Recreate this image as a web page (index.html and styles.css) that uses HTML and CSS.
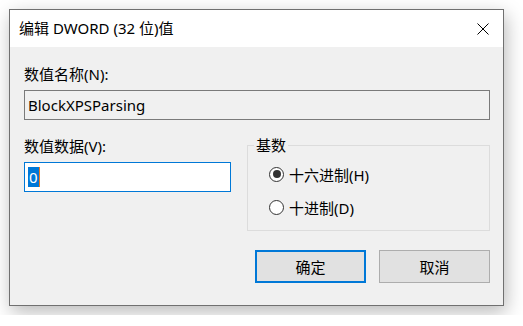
FILE: index.html
```html
<!DOCTYPE html>
<html lang="zh-CN">
<head>
  <meta charset="UTF-8">
  <title>编辑 DWORD (32 位)值</title>
  <link rel="stylesheet" href="styles.css">
</head>
<body>

  <div class="window">
    <div class="titlebar">
      <span class="title">编辑 DWORD (32 位)值</span>
      <svg class="close" width="12" height="12" viewBox="0 0 12 12">
        <path d="M0.5 0.5 L11.5 11.5 M11.5 0.5 L0.5 11.5" stroke="#000" stroke-width="1" fill="none"/>
      </svg>
    </div>

    <div class="content">
      <div class="label">数值名称(N):</div>
      <div class="field readonly">BlockXPSParsing</div>

      <div class="row">
        <div class="data">
          <div class="label">数值数据(V):</div>
          <div class="field active"><span class="sel">0</span><span class="caret"></span></div>
        </div>

        <fieldset class="base">
          <legend>基数</legend>
          <div class="option first"><span class="radio checked"></span>十六进制(H)</div>
          <div class="option"><span class="radio"></span>十进制(D)</div>
        </fieldset>
      </div>

      <div class="buttons">
        <button class="btn default">确定</button>
        <button class="btn">取消</button>
      </div>
    </div>
  </div>

</body>
</html>
```

FILE: styles.css
```css
body {
  margin: 0;
  padding: 9px;
  background-color: #fff;
  font-family: "Noto Sans", "Noto Sans CJK SC", sans-serif;
  font-size: 15px;
  color: #000;
}
.window {
  box-sizing: border-box;
  width: 495px;
  height: 297px;
  border: 1px solid #707070;
  background-color: #f0f0f0;
  box-shadow: 2px 6px 18px rgba(0, 0, 0, 0.28);
}
.titlebar {
  display: flex;
  align-items: center;
  height: 37px;
  padding-left: 9px;
  background-color: #fff;
}
.title {
  flex: 1;
  line-height: 37px;
}
.close {
  margin-right: 14px;
}
.content {
  padding: 17px 13px 0 14px;
}
.label {
  line-height: 20px;
}
.field {
  box-sizing: border-box;
  display: flex;
  align-items: center;
  height: 30px;
  margin-top: 6px;
  padding: 0 3px;
  line-height: 20px;
}
.field.readonly {
  border: 1px solid #7a7a7a;
  background-color: #f0f0f0;
}
.field.active {
  width: 207px;
  margin-top: 5px;
  border: 1px solid #0078d7;
  background-color: #fff;
}
.sel {
  display: inline-block;
  padding: 0 1px;
  background-color: #0078d7;
  color: #fff;
}
.caret {
  display: inline-block;
  width: 1px;
  height: 20px;
  background-color: #f07a1c;
}
.row {
  display: flex;
  align-items: flex-start;
  gap: 16px;
  margin-top: 15px;
}
.row .label {
  line-height: 22px;
}
.base {
  box-sizing: border-box;
  width: 243px;
  margin: 0;
  padding: 0 0 12px 21px;
  border: 1px solid #dcdcdc;
  min-width: 0;
}
.base legend {
  margin-left: -15px;
  padding: 0 2px;
  line-height: 20px;
}
.option {
  display: flex;
  align-items: center;
  gap: 5px;
  height: 22px;
  margin-top: 11px;
}
.option.first {
  margin-top: 8px;
}
.radio {
  box-sizing: border-box;
  display: flex;
  align-items: center;
  justify-content: center;
  width: 15px;
  height: 15px;
  border: 1.3px solid #333;
  border-radius: 50%;
  background-color: #fff;
}
.radio.checked::after {
  content: "";
  width: 8px;
  height: 8px;
  border-radius: 50%;
  background-color: #333;
}
.buttons {
  display: flex;
  justify-content: flex-end;
  gap: 13px;
  margin-top: 19px;
}
.btn {
  box-sizing: border-box;
  width: 111px;
  height: 33px;
  border: 1px solid #adadad;
  background-color: #e1e1e1;
  font-family: inherit;
  font-size: 15px;
  color: #000;
  padding: 0;
}
.btn.default {
  border: 2px solid #0078d7;
}
```
